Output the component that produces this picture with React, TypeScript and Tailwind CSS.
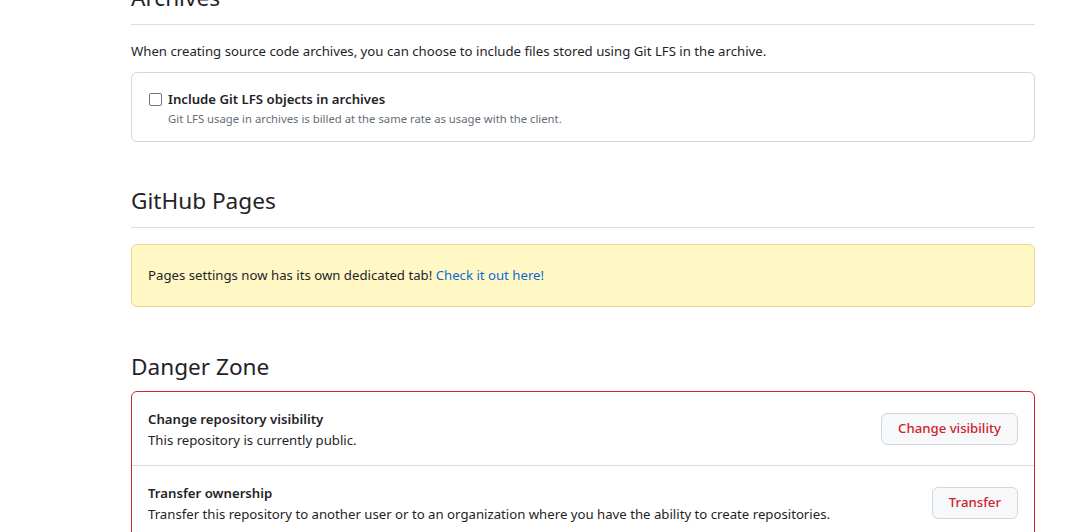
import React from "react";

const font = { fontFamily: '"Noto Sans", "Liberation Sans", sans-serif' };

export default function App() {
  return (
    <div className="min-h-[532px] bg-white text-[#1f2328]" style={font}>
      <div className="ml-[131px] w-[904px] -mt-[20px]">
        {/* Archives */}
        <div className="border-b border-[#d8dee4] pb-[8px]">
          <h2 className="text-[22.6px] leading-[36px] font-normal">Archives</h2>
        </div>
        <p className="mt-[16px] text-[13.2px] leading-[21px]">
          When creating source code archives, you can choose to include files stored using Git LFS in the archive.
        </p>
        <div className="mt-[10px] h-[70px] rounded-[6px] border border-[#d0d7de] px-[16px] pt-[16px]">
          <label className="flex items-center gap-[6px]">
            <span className="ml-[1px] h-[13px] w-[13px] rounded-[2px] border border-[#6e7681] bg-white" />
            <span className="text-[13.2px] leading-[21px] font-semibold">Include Git LFS objects in archives</span>
          </label>
          <p className="ml-[20px] text-[11.3px] leading-[18px] text-[#656d76]">
            Git LFS usage in archives is billed at the same rate as usage with the client.
          </p>
        </div>

        {/* GitHub Pages */}
        <div className="mt-[41px] border-b border-[#d8dee4] pb-[8px]">
          <h2 className="text-[22.6px] leading-[36px] font-normal">GitHub Pages</h2>
        </div>
        <div className="mt-[16px] h-[63px] flex items-center rounded-[6px] border border-[#eed888] bg-[#fff8c5] px-[16px]">
          <p className="text-[13.2px] leading-[21px]">
            Pages settings now has its own dedicated tab!{" "}
            <a className="text-[#0969da]" href="#">Check it out here!</a>
          </p>
        </div>

        {/* Danger Zone */}
        <div className="mt-[42px] pb-[6px]">
          <h2 className="text-[22.6px] leading-[36px] font-normal">Danger Zone</h2>
        </div>
        <div className="rounded-[6px] border border-[#cf222e]">
          <div className="flex h-[74px] items-center justify-between border-b border-[#d8dee4] px-[16px]">
            <div className="pt-[2px]">
              <div className="text-[13.2px] leading-[21px] font-semibold">Change repository visibility</div>
              <div className="text-[13.2px] leading-[21px]">This repository is currently public.</div>
            </div>
            <button className="h-[32px] rounded-[6px] border border-[#d0d7de] bg-[#f6f8fa] px-[16px] text-[13.2px] font-medium text-[#cf222e]">
              Change visibility
            </button>
          </div>
          <div className="flex h-[74px] items-center justify-between px-[16px]">
            <div className="pt-[2px]">
              <div className="text-[13.2px] leading-[21px] font-semibold">Transfer ownership</div>
              <div className="text-[13.2px] leading-[21px]">
                Transfer this repository to another user or to an organization where you have the ability to create repositories.
              </div>
            </div>
            <button className="h-[32px] rounded-[6px] border border-[#d0d7de] bg-[#f6f8fa] px-[16px] text-[13.2px] font-medium text-[#cf222e]">
              Transfer
            </button>
          </div>
        </div>
      </div>
    </div>
  );
}
